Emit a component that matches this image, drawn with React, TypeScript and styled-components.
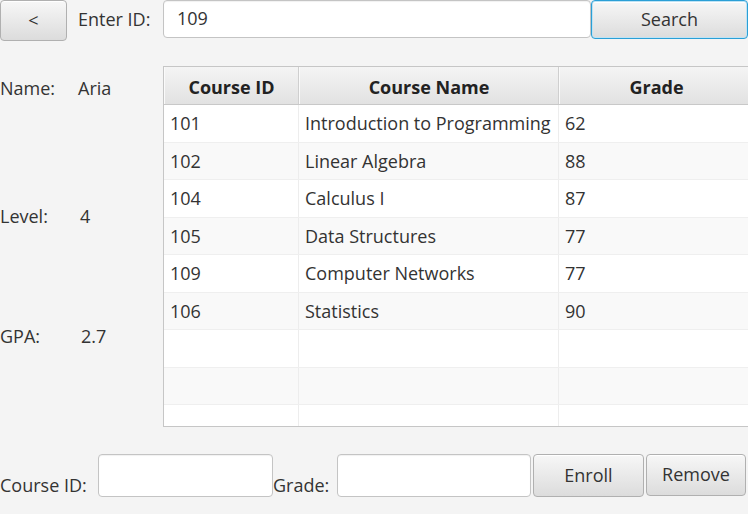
import React from "react";
import styled, { createGlobalStyle, css } from "styled-components";

const Global = createGlobalStyle`
  html, body { margin: 0; padding: 0; background: #f4f4f4; }
  body { font-family: "Open Sans", "Noto Sans", sans-serif; color: #333; }
  * { box-sizing: border-box; }
`;

const Root = styled.div`
  width: 748px;
  height: 514px;
  overflow: hidden;
  background: #f4f4f4;
  font-size: 18px;
  display: flex;
  flex-direction: column;
`;

const TopBar = styled.div`
  display: flex;
  align-items: flex-start;
  height: 41px;
`;

const Button = styled.button<{ $w: number; $h: number; $ml?: number; $focused?: boolean }>`
  width: ${(p) => p.$w}px;
  height: ${(p) => p.$h}px;
  margin-left: ${(p) => p.$ml ?? 0}px;
  flex: none;
  font-family: inherit;
  font-size: 18px;
  color: #333;
  border: 1px solid #b0b0b0;
  border-radius: 4px;
  background: linear-gradient(#f7f7f7, #dcdcdc);
  box-shadow: inset 0 1px 0 #fff;
  padding: 0 0 2px;
  ${(p) =>
    p.$focused &&
    css`
      border: 1px solid #2a9fd6;
      box-shadow: inset 0 0 0 1px #bfe3f4, inset 0 2px 0 #fff;
    `}
`;

const FieldLabel = styled.span<{ $w: number; $ml?: number }>`
  flex: none;
  width: ${(p) => p.$w}px;
  margin-left: ${(p) => p.$ml ?? 0}px;
  line-height: 24px;
  white-space: nowrap;
`;

const TopLabel = styled(FieldLabel)`
  align-self: center;
  margin-top: -4px;
`;

const TextInput = styled.input<{ $w: number; $h: number }>`
  width: ${(p) => p.$w}px;
  height: ${(p) => p.$h}px;
  flex: none;
  font-family: inherit;
  font-size: 18px;
  color: #333;
  background: #fff;
  border: 1px solid #c4c4c4;
  border-radius: 4px;
  box-shadow: inset 0 1px 1px rgba(0, 0, 0, 0.06);
  padding: 0 0 2px 13px;
  outline: none;
`;

const Middle = styled.div`
  display: flex;
  margin-top: 25px;
  height: 361px;
`;

const InfoPanel = styled.div`
  width: 163px;
  flex: none;
  display: flex;
  flex-direction: column;
`;

const InfoRow = styled.div<{ $mt: number }>`
  display: flex;
  margin-top: ${(p) => p.$mt}px;
  line-height: 24px;
`;

const InfoKey = styled.span`
  width: 78px;
`;

const InfoValue = styled.span<{ $pl: number }>`
  padding-left: ${(p) => p.$pl}px;
`;

const Table = styled.div`
  width: 590px;
  flex: none;
  border: 1px solid #c6c6c6;
  border-right: none;
  background: #fff;
  display: flex;
  flex-direction: column;
  overflow: hidden;
`;

const cols = "135px 260px 195px";

const HeaderRow = styled.div`
  display: grid;
  grid-template-columns: ${cols};
  height: 38px;
  flex: none;
  background: linear-gradient(#f4f4f4, #e2e2e2);
  border-bottom: 1px solid #c8c8c8;
`;

const HeaderCell = styled.div`
  display: flex;
  align-items: center;
  justify-content: center;
  padding-top: 2px;
  font-weight: 700;
  color: #222;
  border-right: 1px solid #cfcfcf;
  border-left: 1px solid #fafafa;
`;

const BodyRow = styled.div<{ $alt: boolean }>`
  display: grid;
  grid-template-columns: ${cols};
  height: 37.5px;
  flex: none;
  background: ${(p) => (p.$alt ? "#f9f9f9" : "#fff")};
  border-bottom: 1px solid #efefef;
`;

const BodyCell = styled.div`
  display: flex;
  align-items: center;
  padding-left: 6px;
  border-right: 1px solid #ededed;
  white-space: nowrap;
  overflow: hidden;
`;

const BottomBar = styled.div`
  display: flex;
  align-items: flex-start;
  margin-top: 27px;
  height: 44px;
`;

const BottomLabel = styled(FieldLabel)`
  align-self: flex-end;
  margin-bottom: 1px;
`;

const rows = [
  ["101", "Introduction to Programming", "62"],
  ["102", "Linear Algebra", "88"],
  ["104", "Calculus I", "87"],
  ["105", "Data Structures", "77"],
  ["109", "Computer Networks", "77"],
  ["106", "Statistics", "90"],
  ["", "", ""],
  ["", "", ""],
  ["", "", ""],
];

export default function App() {
  return (
    <Root>
      <Global />
      <TopBar>
        <Button $w={67} $h={41}>&lt;</Button>
        <TopLabel $w={85} $ml={11}>Enter ID:</TopLabel>
        <TextInput $w={428} $h={38} defaultValue="109" />
        <Button $w={157} $h={39} $focused>Search</Button>
      </TopBar>
      <Middle>
        <InfoPanel>
          <InfoRow $mt={10}>
            <InfoKey>Name:</InfoKey>
            <InfoValue $pl={0}>Aria</InfoValue>
          </InfoRow>
          <InfoRow $mt={104}>
            <InfoKey>Level:</InfoKey>
            <InfoValue $pl={2}>4</InfoValue>
          </InfoRow>
          <InfoRow $mt={96}>
            <InfoKey>GPA:</InfoKey>
            <InfoValue $pl={3}>2.7</InfoValue>
          </InfoRow>
        </InfoPanel>
        <Table>
          <HeaderRow>
            <HeaderCell>Course ID</HeaderCell>
            <HeaderCell>Course Name</HeaderCell>
            <HeaderCell>Grade</HeaderCell>
          </HeaderRow>
          {rows.map((r, i) => (
            <BodyRow key={i} $alt={i % 2 === 1}>
              <BodyCell>{r[0]}</BodyCell>
              <BodyCell>{r[1]}</BodyCell>
              <BodyCell>{r[2]}</BodyCell>
            </BodyRow>
          ))}
        </Table>
      </Middle>
      <BottomBar>
        <BottomLabel $w={98}>Course ID:</BottomLabel>
        <TextInput $w={175} $h={43} />
        <BottomLabel $w={64}>Grade:</BottomLabel>
        <TextInput $w={194} $h={43} />
        <Button $w={111} $h={43} $ml={2}>Enroll</Button>
        <Button $w={100} $h={42} $ml={2}>Remove</Button>
      </BottomBar>
    </Root>
  );
}
